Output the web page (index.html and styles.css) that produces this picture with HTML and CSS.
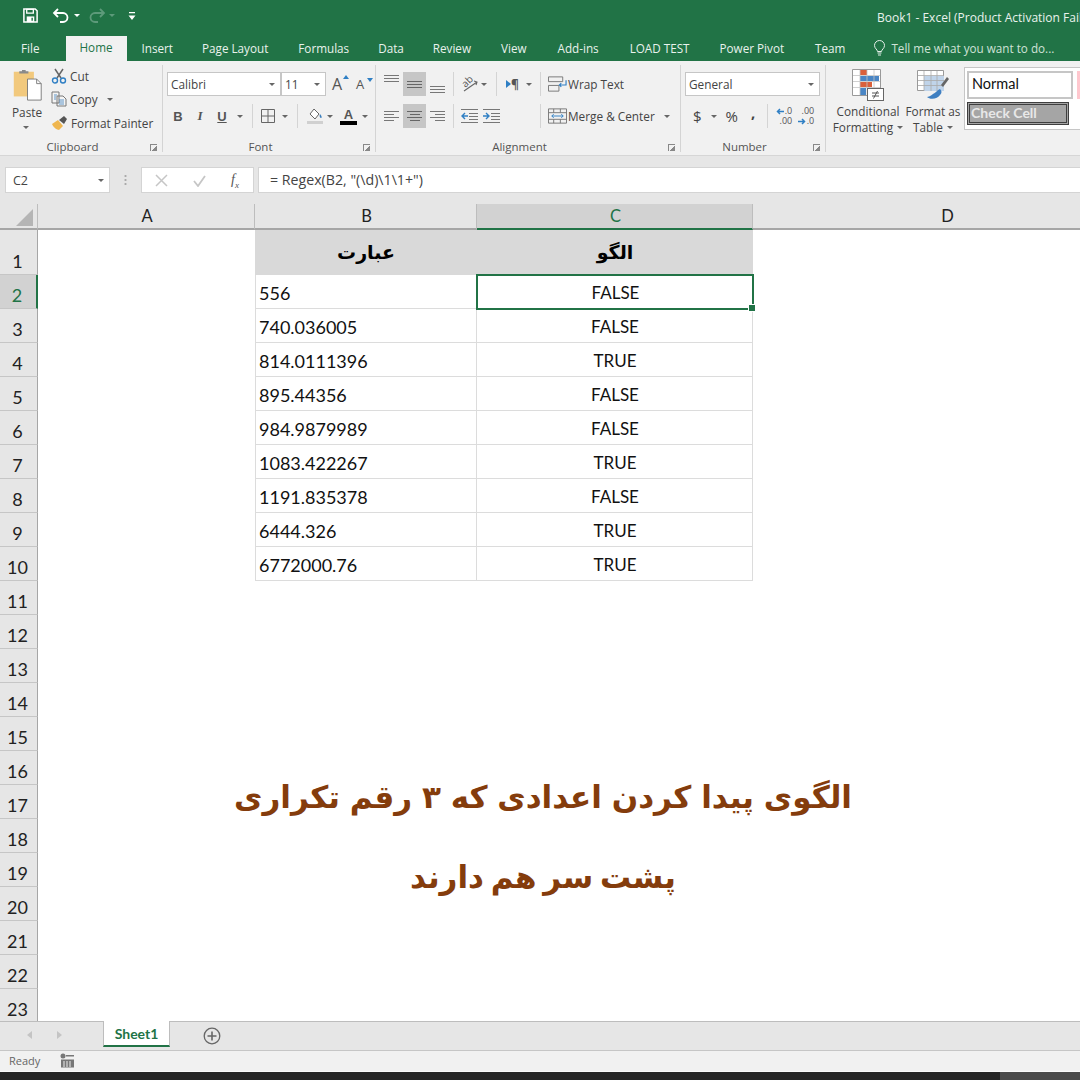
FILE: index.html
```html
<!DOCTYPE html>
<html lang="en">
<head>
  <meta charset="UTF-8">
  <title>Book1 - Excel</title>
  <link rel="stylesheet" href="styles.css">
</head>
<body>
<div class="app">

  <div class="titlebar">
    <div class="qat">
      <svg width="17" height="17" viewBox="0 0 18 18"><path d="M2 2h12l2 2v12H2z" fill="none" stroke="#fff" stroke-width="1.6"/><path d="M5 2.5h7v4H5z" fill="none" stroke="#fff" stroke-width="1.4"/><path d="M5 10h8v6H5z" fill="#fff"/><path d="M10 11.5h1.5v3H10z" fill="#217346"/></svg>
      <svg class="qat-undo" width="19" height="16" viewBox="0 0 19 16"><path d="M6 1L2 5l4 4M2 5h9a4.5 4.5 0 0 1 0 9H8" fill="none" stroke="#fff" stroke-width="1.8"/></svg>
      <span class="caret-w"></span>
      <svg class="qat-redo" width="19" height="16" viewBox="0 0 19 16"><path d="M13 1l4 4-4 4M17 5H8a4.5 4.5 0 0 0 0 9h3" fill="none" stroke="#5d9a7a" stroke-width="1.8"/></svg>
      <span class="caret-w dim"></span>
      <svg class="qat-more" width="8" height="10" viewBox="0 0 8 10"><path d="M1 1h6v1.2H1zM0.5 4.5h7L4 9z" fill="#fff"/></svg>
    </div>
    <div class="doc-title">Book1 - Excel (Product Activation Failed)</div>
  </div>

  <div class="tabs">
    <span class="tab file">File</span>
    <span class="tab active">Home</span>
    <span class="tab insert">Insert</span>
    <span class="tab layout">Page Layout</span>
    <span class="tab formulas">Formulas</span>
    <span class="tab data">Data</span>
    <span class="tab review">Review</span>
    <span class="tab view">View</span>
    <span class="tab addins">Add-ins</span>
    <span class="tab load">LOAD TEST</span>
    <span class="tab pivot">Power Pivot</span>
    <span class="tab team">Team</span>
    <span class="tell">
      <svg width="13" height="16" viewBox="0 0 13 16"><path d="M4.5 11.5C4.500 9.500 1.500 8.500 1.500 5.500a5 5 0 0 1 10 0c0 3-3 4-3 6zM4.500 13h4M5 15h3" fill="none" stroke="#e6f0ea" stroke-width="1"/></svg>
      Tell me what you want to do...
    </span>
  </div>

  <div class="ribbon">
    <section class="group g-clip">
      <div class="group-body clip-body">
        <div class="paste">
          <svg width="31" height="32" viewBox="0 0 32 35"><rect x="1" y="3" width="22" height="27" fill="#f2c97d"/><path d="M7 4h10V1.500h-3V0h-4v1.500H7z" fill="#8a8a8a" transform="translate(0 1)"/><path d="M16 11h10l5 5v18H16z" fill="#fff" stroke="#777"/><path d="M26 11v5h5" fill="none" stroke="#777"/></svg>
          <span>Paste</span>
          <span class="caret"></span>
        </div>
        <div class="clip-list">
          <div class="clip-row">
            <svg width="16" height="16" viewBox="0 0 16 16"><path d="M4 1l6 9M12 1l-6 9" stroke="#666" stroke-width="1.5"/><circle cx="4" cy="12.500" r="2.500" fill="none" stroke="#2f7fc4" stroke-width="1.4"/><circle cx="12" cy="12.500" r="2.500" fill="none" stroke="#2f7fc4" stroke-width="1.4"/></svg>
            Cut
          </div>
          <div class="clip-row">
            <svg width="16" height="16" viewBox="0 0 16 16"><path d="M1 1h7v11H1zM6 5h6l3 3v7H6z" fill="#f4f4f4" stroke="#777"/><path d="M8 9h5M8 11h5M8 13h5M3 4h3M3 6h2M3 8h2" stroke="#3a7ebd" stroke-width=".8"/></svg>
            Copy <span class="caret copy-caret"></span>
          </div>
          <div class="clip-row">
            <svg width="17" height="16" viewBox="0 0 17 16"><path d="M1 9l6-4 5 6-4 4C6 15 2 12 1 9z" fill="#efb64f"/><path d="M8 5l5-4 3 3-3 5z" fill="#555"/></svg>
            Format Painter
          </div>
        </div>
      </div>
      <div class="group-label">Clipboard<span class="launcher"></span></div>
    </section>

    <section class="group g-font">
      <div class="group-body stack">
        <div class="tool-row">
          <span class="select font-name">Calibri<span class="caret"></span></span>
          <span class="select font-size">11<span class="caret"></span></span>
          <span class="grow-a">A<i class="up"></i></span>
          <span class="grow-a small">A<i class="down"></i></span>
        </div>
        <div class="tool-row row-two">
          <b class="fmt">B</b><i class="fmt fmt-i">I</i><u class="fmt">U</u><span class="caret u-caret"></span>
          <span class="sep"></span>
          <svg class="borders" width="14" height="14" viewBox="0 0 14 14"><path d="M.5.5h13v13H.5zM7 .5v13M.5 7h13" fill="none" stroke="#666"/></svg><span class="caret"></span>
          <span class="sep"></span>
          <svg class="fill-icon" width="18" height="18" viewBox="0 0 18 18"><path d="M4 7l4-5 5 5-4 5z" fill="#fff" stroke="#666"/><path d="M14 7c2 2 2 4 1 4s-2-2-1-4z" fill="#3a7ebd"/><rect x="1" y="14" width="16" height="3" fill="#d0d0d0"/></svg><span class="caret"></span>
          <span class="font-color">A</span><span class="caret"></span>
        </div>
      </div>
      <div class="group-label">Font<span class="launcher"></span></div>
    </section>

    <section class="group g-align">
      <div class="group-body stack">
        <div class="tool-row">
          <span class="al v-top"><i></i><i></i><i></i></span>
          <span class="al on"><i></i><i></i><i></i></span>
          <span class="al v-bot"><i></i><i></i><i></i></span>
          <span class="sep sep-a"></span>
          <span class="orient"><b>ab</b><svg width="18" height="16" viewBox="0 0 18 16"><path d="M3 15L16 6M13 5l3 1-1 3" fill="none" stroke="#666" stroke-width="1.1"/></svg></span><span class="caret"></span>
          <span class="sep sep-b"></span>
          <span class="para"><i></i>¶</span><span class="caret"></span>
          <span class="sep sep-c"></span>
          <svg class="wrap-icon" width="19" height="16" viewBox="0 0 20 16"><path d="M.5.5h15v5H.5zM.5 9.500h11v6H.5z" fill="none" stroke="#777"/><path d="M19 4v5h-7m2-2l-2 2 2 2" fill="none" stroke="#2f7fc4" stroke-width="1.2"/></svg>
          <span class="wide-btn">Wrap Text</span>
        </div>
        <div class="tool-row row-two">
          <span class="al h-left"><i></i><i></i><i></i><i></i></span>
          <span class="al on h-center"><i></i><i></i><i></i><i></i></span>
          <span class="al h-right"><i></i><i></i><i></i><i></i></span>
          <span class="sep sep-a"></span>
          <svg class="indent" width="17" height="14" viewBox="0 0 17 14"><path d="M0 .5h17M8 4.500h9M8 7.500h9M8 10.500h9M0 13.500h17" stroke="#777"/><path d="M7 7H1m3-3L1 7l3 3" fill="none" stroke="#2f7fc4" stroke-width="1.4"/></svg>
          <svg class="indent two" width="17" height="14" viewBox="0 0 17 14"><path d="M0 .5h17M8 4.500h9M8 7.500h9M8 10.500h9M0 13.500h17" stroke="#777"/><path d="M0 7h6M3 4l3 3-3 3" fill="none" stroke="#2f7fc4" stroke-width="1.4"/></svg>
          <span class="sep merge-sep"></span>
          <svg class="merge-icon" width="19" height="16" viewBox="0 0 20 16"><path d="M.5.5h19v15H.5zM.5 4.500h19M.5 11.500h19M6 .5v4M13 .5v4M6 11.500v4M13 11.500v4" fill="none" stroke="#777"/><path d="M4 8h12M6 6L4 8l2 2M14 6l2 2-2 2" fill="none" stroke="#2f7fc4"/></svg>
          <span class="wide-btn">Merge &amp; Center</span><span class="caret"></span>
        </div>
      </div>
      <div class="group-label">Alignment<span class="launcher"></span></div>
    </section>

    <section class="group g-num">
      <div class="group-body stack">
        <div class="tool-row">
          <span class="select num-format">General<span class="caret"></span></span>
        </div>
        <div class="tool-row row-two">
          <span class="sym dollar">$</span><span class="caret"></span>
          <span class="sym pct">%</span>
          <span class="sym comma">,</span>
          <span class="sep sep-n"></span>
          <div class="dec">
            <div class="dec-line"><svg width="8" height="7" viewBox="0 0 8 7"><path d="M8 3.500H2M4 1L1.500 3.500 4 6" fill="none" stroke="#2f7fc4" stroke-width="1.500"/></svg><span>.0</span></div>
            <div class="dec-line"><span>.00</span></div>
          </div>
          <div class="dec">
            <div class="dec-line"><span>.00</span></div>
            <div class="dec-line"><svg width="8" height="7" viewBox="0 0 8 7"><path d="M0 3.500h6M4 1l2.500 2.500L4 6" fill="none" stroke="#2f7fc4" stroke-width="1.500"/></svg><span>.0</span></div>
          </div>
        </div>
      </div>
      <div class="group-label">Number<span class="launcher"></span></div>
    </section>

    <section class="g-styles">
      <div class="big-btn cond">
        <svg width="32" height="32" viewBox="0 0 32 32"><path d="M.5.5h28v26H.5z" fill="#fff" stroke="#999"/><path d="M8 1h7v5H8z" fill="#d9603b"/><path d="M8 7h19v5H8z" fill="#4a86c5"/><path d="M8 13h12v5H8z" fill="#d9603b"/><path d="M8 19h6v7H8z" fill="#4a86c5"/><path d="M1 6.500h27M1 12.500h27M1 18.500h27M8 1v25M15 1v25M22 1v25" stroke="#c4c4c4" fill="none" stroke-width=".8"/><rect x="15.500" y="19.500" width="16" height="12" fill="#fff" stroke="#666"/><path d="M20 24h7M20 27h7M25.500 22l-4 7.500" stroke="#555" fill="none"/></svg>
        <span>Conditional</span>
        <span>Formatting<i class="caret"></i></span>
      </div>
      <div class="big-btn table-btn">
        <svg width="32" height="32" viewBox="0 0 32 32"><path d="M.5 1.500h26v20H.5z" fill="#fff" stroke="#999"/><path d="M7 7h20v15H7z" fill="#c0d4ea"/><path d="M1 6.500h26M1 11.500h26M1 16.500h26M7 2v20M14 2v20M20 2v20" stroke="#aaa" fill="none" stroke-width=".8"/><path d="M24 16l6-8 2 2-6 8z" fill="#666"/><path d="M24 17c-3 1-3 3-7 5-2 2-5 3-6 3 3 3 11 2 13-2 2-2 2-4 0-6z" fill="#3f7fc1" transform="translate(-1 3)"/></svg>
        <span>Format as</span>
        <span>Table<i class="caret"></i></span>
      </div>
      <div class="style-gallery">
        <div class="style-normal">Normal</div>
        <div class="style-check">Check Cell</div>
        <div class="style-bad"></div>
      </div>
    </section>
  </div>

  <div class="formula-bar">
    <div class="name-box">C2<span class="caret"></span></div>
    <div class="grip"></div>
    <div class="fx-box">
      <svg width="13" height="13" viewBox="0 0 13 13"><path d="M1 1l11 11M12 1L1 12" stroke="#c6c6c6" stroke-width="1.500"/></svg>
      <svg width="13" height="13" viewBox="0 0 13 13"><path d="M1 7l4 5 7-10" fill="none" stroke="#c6c6c6" stroke-width="1.800"/></svg>
      <span class="fx"><i>f</i><sub>x</sub></span>
    </div>
    <div class="formula">= Regex(B2, "(\d)\1\1+")</div>
  </div>

  <div class="sheet-wrap">
    <div class="sheet">
      <div class="corner"><span></span></div>
      <div class="col-head">A</div>
      <div class="col-head">B</div>
      <div class="col-head sel">C</div>
      <div class="col-head">D</div>

      <div class="row-head tall">1</div><div class="cell plain"></div>
      <div class="cell head" dir="rtl">عبارت</div><div class="cell head" dir="rtl">الگو</div><div class="cell plain"></div>

      <div class="row-head sel">2</div><div class="cell plain"></div>
      <div class="cell num">556</div><div class="cell bool current">FALSE</div><div class="cell plain"></div>

      <div class="row-head">3</div><div class="cell plain"></div>
      <div class="cell num">740.036005</div><div class="cell bool">FALSE</div><div class="cell plain"></div>

      <div class="row-head">4</div><div class="cell plain"></div>
      <div class="cell num">814.0111396</div><div class="cell bool">TRUE</div><div class="cell plain"></div>

      <div class="row-head">5</div><div class="cell plain"></div>
      <div class="cell num">895.44356</div><div class="cell bool">FALSE</div><div class="cell plain"></div>

      <div class="row-head">6</div><div class="cell plain"></div>
      <div class="cell num">984.9879989</div><div class="cell bool">FALSE</div><div class="cell plain"></div>

      <div class="row-head">7</div><div class="cell plain"></div>
      <div class="cell num">1083.422267</div><div class="cell bool">TRUE</div><div class="cell plain"></div>

      <div class="row-head">8</div><div class="cell plain"></div>
      <div class="cell num">1191.835378</div><div class="cell bool">FALSE</div><div class="cell plain"></div>

      <div class="row-head">9</div><div class="cell plain"></div>
      <div class="cell num">6444.326</div><div class="cell bool">TRUE</div><div class="cell plain"></div>

      <div class="row-head">10</div><div class="cell plain"></div>
      <div class="cell num">6772000.76</div><div class="cell bool">TRUE</div><div class="cell plain"></div>

      <div class="row-head">11</div><div class="empty-row"></div>
      <div class="row-head">12</div><div class="empty-row"></div>
      <div class="row-head">13</div><div class="empty-row"></div>
      <div class="row-head">14</div><div class="empty-row"></div>
      <div class="row-head">15</div><div class="empty-row"></div>
      <div class="row-head">16</div><div class="empty-row"></div>
      <div class="row-head">17</div><div class="empty-row"></div>
      <div class="row-head">18</div><div class="empty-row"></div>
      <div class="row-head">19</div><div class="empty-row"></div>
      <div class="row-head">20</div><div class="empty-row"></div>
      <div class="row-head">21</div><div class="empty-row"></div>
      <div class="row-head">22</div><div class="empty-row"></div>
      <div class="row-head">23</div><div class="empty-row"></div>
    </div>
    <div class="overlay-title" dir="rtl">
      <p>الگوی پیدا کردن اعدادی که ۳ رقم تکراری</p>
      <p class="second">پشت سر هم دارند</p>
    </div>
  </div>

  <div class="sheet-tabs">
    <span class="nav-arrow left"></span>
    <span class="nav-arrow right"></span>
    <span class="sheet-tab">Sheet1</span>
    <svg class="add-sheet" width="18" height="18" viewBox="0 0 18 18"><circle cx="9" cy="9" r="7.800" fill="none" stroke="#666" stroke-width="1.300"/><path d="M9 4.500v9M4.500 9h9" stroke="#666" stroke-width="1.600"/></svg>
  </div>

  <div class="status">
    <span>Ready</span>
    <svg width="14" height="15" viewBox="0 0 14 15"><circle cx="3" cy="3" r="2.500" fill="#777"/><path d="M6 2h8v1.500H6zM1 6.500h13v8H1z" fill="#777"/><path d="M4 8v6M7 8v6M10 8v6" stroke="#eee"/></svg>
  </div>
  <div class="taskbar"><span class="task-tray"></span></div>
</div>
</body>
</html>
```

FILE: styles.css
```css
* {
  box-sizing: border-box;
}

html, body {
  margin: 0;
  padding: 0;
}

body {
  width: 1080px;
  height: 1080px;
  overflow: hidden;
  font-family: "Open Sans", "Noto Sans", sans-serif;
  background: #fff;
}

.app {
  width: 1080px;
  height: 1080px;
  display: flex;
  flex-direction: column;
  overflow: hidden;
}

/* title bar */
.titlebar {
  height: 36px;
  background: #217346;
  display: flex;
  align-items: center;
  color: #fff;
  flex: none;
}

.qat {
  display: flex;
  align-items: center;
  padding: 0 0 5px 22px;
  height: 32px;
}

.qat-undo {
  margin-left: 13px;
}

.caret-w {
  width: 0;
  height: 0;
  border: 3px solid transparent;
  border-top: 3px solid #fff;
  margin: 3px 0 0 3px;
}

.caret-w.dim {
  border-top-color: #5d9a7a;
}

.qat-redo {
  margin-left: 7px;
}

.qat-more {
  margin-left: 13px;
}

.doc-title {
  margin-left: auto;
  width: 203px;
  white-space: nowrap;
  overflow: hidden;
  font-size: 12px;
  padding-bottom: 1px;
  color: #e9f2ed;
}

/* tabs */
.tabs {
  height: 25px;
  background: #217346;
  display: flex;
  align-items: center;
  color: #e9f2ed;
  font-size: 11.7px;
  flex: none;
}

.tab {
  white-space: nowrap;
  flex: none;
  margin-bottom: 2px;
}

.tab.file { margin-left: 21px; }
.tab.active {
  margin: 0 0 0 26px;
  width: 61px;
  height: 25px;
  line-height: 23px;
  text-align: center;
  background: #f1f1f1;
  color: #217346;
}
.tab.insert { margin-left: 15px; }
.tab.layout { margin-left: 29px; }
.tab.formulas { margin-left: 30px; }
.tab.data { margin-left: 29px; }
.tab.review { margin-left: 29px; }
.tab.view { margin-left: 30px; }
.tab.addins { margin-left: 31px; }
.tab.load { margin-left: 31px; }
.tab.pivot { margin-left: 30px; }
.tab.team { margin-left: 31px; }

.tell {
  margin: 0 0 2px 28px;
  display: flex;
  align-items: center;
  gap: 5px;
  white-space: nowrap;
  color: #cfe2d7;
}

/* ribbon */
.ribbon {
  height: 95px;
  background: #f1f1f1;
  border-bottom: 1px solid #d6d6d6;
  display: flex;
  flex: none;
  padding-top: 4px;
  color: #444;
  font-size: 11.8px;
  overflow: hidden;
}

.group {
  display: flex;
  flex-direction: column;
  border-right: 1px solid #d4d4d4;
  height: 87px;
  flex: none;
}

.g-clip { width: 163px; }
.g-font { width: 213px; }
.g-align { width: 305px; }
.g-num { width: 145px; }

.group-body {
  height: 75px;
  flex: none;
}

.group-label {
  height: 12px;
  font-size: 11.5px;
  line-height: 14px;
  text-align: center;
  color: #555;
  position: relative;
  padding-right: 17px;
}

.launcher {
  position: absolute;
  right: 5px;
  top: 4px;
  width: 7px;
  height: 7px;
  border-left: 1px solid #888;
  border-top: 1px solid #888;
  background: linear-gradient(135deg, transparent 55%, #888 55%);
}

.caret {
  display: inline-block;
  flex: none;
  width: 0;
  height: 0;
  border: 3px solid transparent;
  border-top: 3px solid #666;
  margin-top: 3px;
}

.clip-body {
  display: flex;
}

.paste {
  width: 51px;
  padding: 4px 0 0 12px;
  display: flex;
  flex-direction: column;
  align-items: flex-start;
  color: #444;
}

.paste span:nth-child(2) {
  margin-top: 3px;
  line-height: 17px;
}

.paste .caret {
  margin: 5px 0 0 11px;
}

.clip-list {
  margin-top: -1px;
  display: flex;
  flex-direction: column;
}

.clip-row {
  height: 23.5px;
  display: flex;
  align-items: center;
  gap: 3px;
  white-space: nowrap;
}

.copy-caret {
  margin-left: 6px;
}

.stack {
  display: flex;
  flex-direction: column;
  padding-top: 7px;
}

.tool-row {
  height: 24px;
  display: flex;
  align-items: center;
  flex: none;
}

.row-two {
  margin-top: 8px;
}

.select {
  height: 24px;
  background: #fff;
  border: 1px solid #c6c6c6;
  display: flex;
  align-items: center;
  justify-content: space-between;
  padding: 0 5px 0 3px;
  color: #444;
}

.font-name {
  width: 114px;
  margin-left: 4px;
}

.font-size {
  width: 45px;
}

.grow-a {
  font-size: 16px;
  margin-left: 6px;
  position: relative;
  width: 15px;
  color: #555;
}

.grow-a.small {
  font-size: 13px;
  margin-left: 9px;
}

.grow-a i {
  position: absolute;
  right: -2px;
  top: 3px;
  width: 0;
  height: 0;
  border: 3px solid transparent;
}

.grow-a .up {
  border-bottom: 4px solid #2f7fc4;
  top: -1px;
}

.grow-a .down {
  border-top: 4px solid #2f7fc4;
  top: 3px;
}

.fmt {
  width: 22px;
  text-align: center;
  font-family: "Liberation Sans", sans-serif;
  font-size: 13px;
  font-weight: bold;
  color: #555;
}

.row-two .fmt:first-child {
  margin-left: 4px;
}

.fmt-i {
  font-family: "Liberation Serif", serif;
}

.u-caret {
  margin-left: 4px;
}

.sep {
  width: 1px;
  height: 24px;
  background: #d4d4d4;
  margin: 0 8px 0 9px;
  flex: none;
}

.borders + .caret {
  margin-left: 7px;
}

.fill-icon + .caret {
  margin-left: 3px;
}

.orient {
  position: relative;
  display: block;
  width: 18px;
  height: 16px;
  flex: none;
}

.orient b {
  position: absolute;
  left: 0;
  top: -2px;
  font-size: 10px;
  font-weight: normal;
  color: #555;
  transform: rotate(-45deg);
}

.orient svg {
  display: block;
}

.orient + .caret {
  margin-left: 2px;
}

.font-color {
  margin-left: 7px;
  width: 17px;
  text-align: center;
  font-family: "Liberation Sans", sans-serif;
  font-weight: bold;
  font-size: 13px;
  line-height: 13px;
  border-bottom: 4px solid #000;
  color: #555;
}

.font-color + .caret {
  margin-left: 5px;
}

.al {
  width: 23px;
  height: 24px;
  display: flex;
  flex-direction: column;
  align-items: center;
  justify-content: center;
  gap: 2px;
}

.g-align .tool-row > .al:first-child {
  margin-left: 4px;
}

.al i {
  display: block;
  height: 1px;
  width: 15px;
  background: #777;
}

.al.on {
  background: #c6c6c6;
}

.al.on i {
  background: #666;
}

.v-top {
  justify-content: flex-start;
  padding-top: 3px;
}

.v-bot {
  justify-content: flex-end;
  padding-bottom: 3px;
}

.h-left i:nth-child(even) { width: 10px; align-self: flex-start; margin-left: 4px; }
.h-left i:nth-child(odd) { align-self: flex-start; margin-left: 4px; }
.h-center i:nth-child(even) { width: 10px; }
.h-right i:nth-child(even) { width: 10px; align-self: flex-end; margin-right: 4px; }
.h-right i:nth-child(odd) { align-self: flex-end; margin-right: 4px; }

.sep-a {
  margin: 0 7px 0 4px;
}

.sep-b {
  margin: 0 9px;
}

.sep-c {
  margin: 0 7px 0 8px;
}

.para {
  display: flex;
  align-items: center;
  width: 18px;
  font-size: 12px;
  color: #555;
  font-weight: bold;
}

.para i {
  width: 0;
  height: 0;
  border: 4px solid transparent;
  border-left: 5px solid #2f7fc4;
  border-right: 0;
}

.para + .caret {
  margin-left: 2px;
}

.wide-btn {
  margin-left: 1px;
  white-space: nowrap;
  color: #444;
}

.indent.two {
  margin-left: 5px;
}

.merge-sep {
  margin: 0 7px 0 40px;
}

.wide-btn + .caret {
  margin-left: 9px;
}

.num-format {
  width: 135px;
  margin-left: 4px;
}

.sym {
  font-size: 15px;
  color: #444;
}

.dollar {
  margin-left: 12px;
}

.dollar + .caret {
  margin-left: 9px;
}

.pct {
  margin-left: 9px;
}

.comma {
  margin-left: 13px;
  font-weight: bold;
  position: relative;
  top: -4px;
}

.sep-n {
  margin: 0 7px 0 12px;
}

.dec {
  width: 17px;
  margin-right: 5px;
  flex: none;
  font-size: 9px;
  line-height: 10px;
  color: #555;
}

.dec-line {
  height: 10px;
  display: flex;
  align-items: center;
  justify-content: flex-end;
  gap: 1px;
}

.g-styles {
  display: flex;
  flex: none;
  padding-top: 4px;
  height: 87px;
}

.big-btn {
  display: flex;
  flex-direction: column;
  align-items: center;
  line-height: 16px;
  white-space: nowrap;
  color: #444;
  flex: none;
}

.big-btn svg {
  margin-bottom: 2px;
}

.big-btn .caret {
  margin-left: 4px;
}

.cond {
  width: 84px;
}

.table-btn {
  width: 46px;
}

.style-gallery {
  margin: -2px 0 0 8px;
  flex: none;
  width: 120px;
  height: 63px;
  background: #fff;
  border: 1px solid #c6c6c6;
  padding: 3px 2px;
  display: grid;
  grid-template-columns: 106px 20px;
  grid-template-rows: 28px 23px;
  row-gap: 3px;
  overflow: hidden;
}

.style-normal {
  border: 2px solid #c6c6c6;
  font-family: "Lato", sans-serif;
  font-size: 14.5px;
  line-height: 22px;
  padding-left: 3px;
  color: #111;
}

.style-bad {
  grid-column: 2;
  grid-row: 1;
  background: #ffc7ce;
  margin-left: 4px;
}

.style-check {
  grid-row: 2;
  grid-column: 1;
  width: 102px;
  background: #a5a5a5;
  border: 3px double #3f3f3f;
  font-family: "Lato", sans-serif;
  font-weight: bold;
  font-size: 14px;
  line-height: 16px;
  padding-left: 1px;
  color: #e8e8e8;
}

/* formula bar */
.formula-bar {
  height: 48px;
  background: #e6e6e6;
  flex: none;
  display: flex;
  padding: 11px 0 11px 5px;
  font-size: 12.5px;
  color: #444;
}

.name-box {
  width: 105px;
  height: 26px;
  background: #fff;
  border: 1px solid #d4d4d4;
  display: flex;
  align-items: center;
  justify-content: space-between;
  padding: 0 5px 0 7px;
  flex: none;
}

.grip {
  width: 31px;
  margin: 7px 0;
  flex: none;
  background: radial-gradient(circle, #aaa 1px, transparent 1.2px) center top / 3px 4px repeat-y;
}

.fx-box {
  width: 113px;
  height: 26px;
  background: #fff;
  border: 1px solid #d4d4d4;
  display: flex;
  align-items: center;
  justify-content: space-between;
  padding: 0 14px 0 13px;
  flex: none;
}

.fx {
  font-family: "Liberation Serif", serif;
  font-size: 14px;
  color: #555;
}

.fx sub {
  font-size: 9px;
  font-style: italic;
  line-height: 0;
}

.formula {
  flex: 1;
  height: 26px;
  margin-left: 4px;
  background: #fff;
  border: 1px solid #d4d4d4;
  border-right: 0;
  line-height: 24px;
  padding-left: 11px;
  font-size: 14.2px;
  color: #444;
}

/* sheet */
.sheet-wrap {
  flex: 1;
  min-height: 0;
  position: relative;
  overflow: hidden;
  background: #fff;
}

.sheet {
  display: grid;
  grid-template-columns: 38px 217px 222px 276px 388px;
  grid-template-rows: 26px 45px repeat(31, 34px);
  font-family: "Lato", sans-serif;
}

.corner {
  background: #e6e6e6;
  border-right: 1px solid #bdbdbd;
  border-bottom: 2px solid #a6a6a6;
  position: relative;
}

.corner span {
  position: absolute;
  right: 4px;
  bottom: 2px;
  width: 0;
  height: 0;
  border-left: 17px solid transparent;
  border-bottom: 17px solid #b5b5b5;
}

.col-head {
  background: #e6e6e6;
  border-right: 1px solid #bdbdbd;
  border-bottom: 2px solid #a6a6a6;
  font-size: 16.5px;
  text-align: center;
  line-height: 25px;
  padding-left: 2px;
  color: #222;
}

.col-head.sel {
  background: #d2d2d2;
  border-bottom: 2px solid #217346;
  color: #217346;
}

.row-head {
  grid-column: 1;
  background: #e6e6e6;
  border-right: 1px solid #a6a6a6;
  border-bottom: 1px solid #c6c6c6;
  font-size: 18px;
  text-align: center;
  padding: 8px 2px 0 0;
  line-height: 25px;
  color: #222;
}

.row-head.tall {
  padding-top: 19px;
}

.row-head.sel {
  background: #d2d2d2;
  border-right: 2px solid #217346;
  color: #217346;
}

.cell {
  font-size: 18px;
  color: #111;
  line-height: 36px;
  white-space: nowrap;
}

.cell.plain {
  background: #fff;
}

.cell.head {
  background: #d9d9d9;
  text-align: center;
  font-family: "DejaVu Sans", sans-serif;
  font-weight: bold;
  font-size: 19px;
  line-height: 44px;
  color: #000;
}

.cell.num {
  border-right: 1px solid #dcdcdc;
  border-bottom: 1px solid #dcdcdc;
  border-left: 1px solid #dcdcdc;
  padding-left: 3px;
}

.cell.bool {
  border-right: 1px solid #dcdcdc;
  border-bottom: 1px solid #dcdcdc;
  text-align: center;
  padding-left: 1px;
  font-size: 17px;
}

.cell.current {
  position: relative;
  border: 2px solid #217346;
  margin: -1px -1px 0 -1px;
  height: 36px;
  z-index: 1;
  line-height: 34px;
}

.cell.current::after {
  content: "";
  position: absolute;
  right: -4px;
  bottom: -4px;
  width: 6px;
  height: 6px;
  background: #217346;
  border: 1px solid #fff;
}

.empty-row {
  grid-column: 2 / -1;
}

.overlay-title {
  position: absolute;
  left: 0;
  top: 553px;
  width: 1086px;
  text-align: center;
  font-family: "DejaVu Sans", sans-serif;
  font-weight: bold;
  font-size: 31px;
  word-spacing: -1px;
  color: #843c0c;
}

.overlay-title p {
  margin: 0;
  height: 80px;
  line-height: 80px;
  white-space: nowrap;
}

.overlay-title .second {
  word-spacing: -4px;
}

/* sheet tabs and status bar */
.sheet-tabs {
  height: 29px;
  background: #e6e6e6;
  border-top: 1px solid #bdbdbd;
  display: flex;
  align-items: flex-start;
  flex: none;
}

.nav-arrow {
  width: 0;
  height: 0;
  border: 4px solid transparent;
  margin-top: 9px;
}

.nav-arrow.left {
  border-right: 5px solid #c4c4c4;
  border-left: 0;
  margin-left: 27px;
}

.nav-arrow.right {
  border-left: 5px solid #c4c4c4;
  border-right: 0;
  margin-left: 25px;
}

.sheet-tab {
  margin: -1px 0 0 41px;
  width: 67px;
  height: 26px;
  background: #fff;
  border-left: 1px solid #bdbdbd;
  border-right: 1px solid #bdbdbd;
  border-bottom: 2px solid #217346;
  text-align: center;
  font-family: "Lato", sans-serif;
  font-weight: bold;
  font-size: 14px;
  line-height: 26px;
  color: #217346;
}

.add-sheet {
  margin: 5px 0 0 33px;
}

.status {
  height: 22px;
  background: #f1f1f1;
  border-top: 1px solid #c6c6c6;
  border-bottom: 1px solid #fafafa;
  display: flex;
  align-items: center;
  gap: 20px;
  padding: 0 0 2px 9px;
  font-size: 11px;
  color: #666;
  flex: none;
}

.taskbar {
  height: 8px;
  background: #252525;
  flex: none;
  display: flex;
  justify-content: flex-end;
}

.task-tray {
  width: 80px;
  background: #4a4a4a;
}
```
